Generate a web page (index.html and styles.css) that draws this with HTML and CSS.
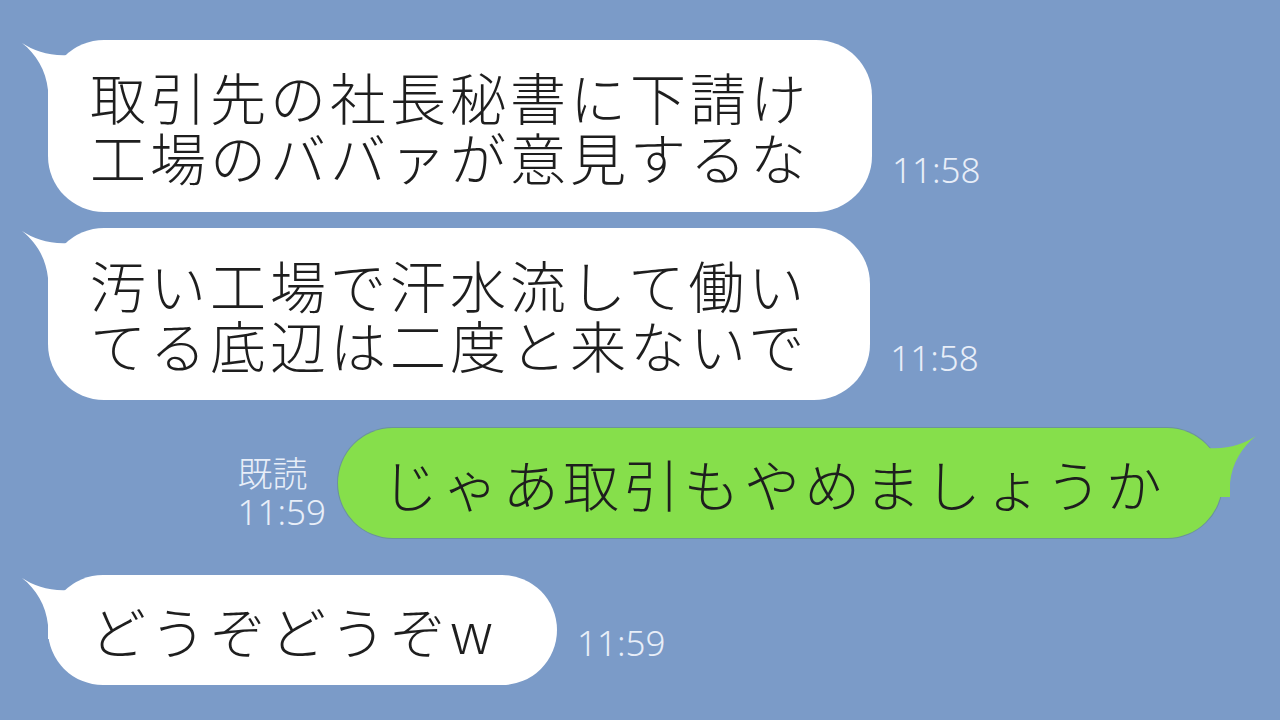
FILE: index.html
```html
<!DOCTYPE html>
<html lang="ja">
<head>
<meta charset="utf-8">
<link rel="stylesheet" href="styles.css">
</head>
<body>
<div class="chat">
  <div class="row row-1">
    <div class="bubble left">
      <svg class="tail tail-left" viewBox="0 0 60 64" width="60" height="64"><path d="M2,3 C16,12 34,18 58,14 L58,64 L28,64 L28,50 C26,30 16,14 2,3 Z"/></svg>
      <p class="msg">取引先の社長秘書に下請け<br>工場のババァが意見するな</p>
    </div>
    <span class="time">11:58</span>
  </div>
  <div class="row row-2">
    <div class="bubble left">
      <svg class="tail tail-left" viewBox="0 0 60 64" width="60" height="64"><path d="M2,3 C16,12 34,18 58,14 L58,64 L28,64 L28,50 C26,30 16,14 2,3 Z"/></svg>
      <p class="msg">汚い工場で汗水流して働い<br>てる底辺は二度と来ないで</p>
    </div>
    <span class="time">11:58</span>
  </div>
  <div class="row row-3">
    <div class="read">
      <span class="read-label">既読</span>
      <span class="read-time">11:59</span>
    </div>
    <div class="bubble right">
      <svg class="tail tail-right" viewBox="0 0 60 64" width="60" height="64"><path d="M58,3 C44,12 26,18 2,14 L2,64 L32,64 L32,50 C34,30 44,14 58,3 Z"/></svg>
      <p class="msg msg-wide">じゃあ取引もやめましょうか</p>
    </div>
  </div>
  <div class="row row-4">
    <div class="bubble left">
      <svg class="tail tail-left" viewBox="0 0 60 64" width="60" height="64"><path d="M2,3 C16,12 34,18 58,14 L58,64 L28,64 L28,50 C26,30 16,14 2,3 Z"/></svg>
      <p class="msg">どうぞどうぞw</p>
    </div>
    <span class="time">11:59</span>
  </div>
</div>
</body>
</html>
```
FILE: styles.css
```css
html, body {
  margin: 0;
  padding: 0;
  width: 1280px;
  height: 720px;
  overflow: hidden;
  background: #7b9bc8;
}
.chat {
  display: flex;
  flex-direction: column;
  padding: 40px 0 0 48px;
  font-family: "Noto Sans CJK JP", "Noto Sans", sans-serif;
}
.row {
  display: flex;
  align-items: flex-end;
}
.row-2 { margin-top: 16px; }
.row-3 { margin-top: 28px; justify-content: flex-end; padding-right: 58px; }
.row-4 { margin-top: 37px; }
.bubble {
  position: relative;
  border-radius: 56px;
}
.bubble.left {
  background: #ffffff;
  padding: 26px 62px 26px 42px;
}
.bubble.right {
  background: #86df4b;
  padding: 25px 56px 25px 44px;
  box-shadow: 0 0 0 1px rgba(60, 120, 30, 0.25);
}
.row-4 .bubble.left { padding: 25px 60px 25px 42px; }
.tail {
  position: absolute;
  top: 0;
}
.tail-left { left: -28px; fill: #ffffff; }
.tail-right { right: -36px; top: 5px; fill: #86df4b; }
.msg {
  position: relative;
  margin: 0;
  font-size: 56px;
  line-height: 60px;
  letter-spacing: 4px;
  font-weight: 300;
  color: #1e1e1e;
  white-space: nowrap;
}
.msg-wide { letter-spacing: 4.3px; }
.time {
  margin: 0 0 24px 20px;
  font-family: "Noto Sans", sans-serif;
  font-weight: 300;
  font-size: 35px;
  line-height: 36px;
  color: #e8eef8;
}
.read {
  display: flex;
  flex-direction: column;
  margin: 0 12px 6px 0;
  font-weight: 300;
  color: #e8eef8;
}
.read-label {
  font-family: "Noto Sans CJK JP", sans-serif;
  font-size: 35px;
  line-height: 40px;
}
.read-time {
  font-family: "Noto Sans", sans-serif;
  font-size: 35px;
  line-height: 40px;
}
```
